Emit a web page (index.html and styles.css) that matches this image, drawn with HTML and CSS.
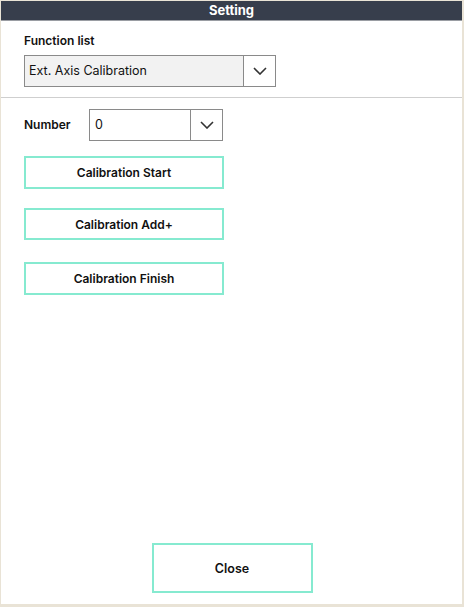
FILE: index.html
```html
<!DOCTYPE html>
<html>
<head>
<meta charset="utf-8">
<link rel="stylesheet" href="styles.css">
</head>
<body>
<div class="frame">
  <div class="header">Setting</div>
  <div class="panel">
    <div class="top">
      <div class="label">Function list</div>
      <div class="select wide">
        <div class="value">Ext. Axis Calibration</div>
        <div class="arrow"><svg width="14" height="8" viewBox="0 0 14 8"><path d="M1 1 L7 7 L13 1" fill="none" stroke="#333" stroke-width="1.6"/></svg></div>
      </div>
    </div>
    <div class="body">
      <div class="row">
        <div class="label inline">Number</div>
        <div class="select narrow">
          <div class="value white">0</div>
          <div class="arrow"><svg width="14" height="8" viewBox="0 0 14 8"><path d="M1 1 L7 7 L13 1" fill="none" stroke="#333" stroke-width="1.6"/></svg></div>
        </div>
      </div>
      <button class="btn b1">Calibration Start</button>
      <button class="btn b2">Calibration Add+</button>
      <button class="btn b3">Calibration Finish</button>
    </div>
    <div class="footer">
      <button class="btn close">Close</button>
    </div>
  </div>
</div>
</body>
</html>
```
FILE: styles.css
```css
* { box-sizing: border-box; }
html, body { margin: 0; padding: 0; }
body {
  width: 464px; height: 607px;
  background: #e9e3d6;
  font-family: "Inter", "Open Sans", sans-serif;
  color: #111;
}
.frame {
  margin: 1px 2px 0 1px;
  height: 603px;
  display: flex;
  flex-direction: column;
  background: #fff;
}
.header {
  height: 20px;
  background: #373e4c;
  color: #fff;
  font-weight: 700;
  font-size: 13px;
  text-align: center;
  line-height: 19px;
  border-bottom: 1px solid #9a9da3;
}
.panel { flex: 1; display: flex; flex-direction: column; }
.top {
  padding: 12px 0 10px 23px;
  border-bottom: 1px solid #cfcfcf;
}
.label {
  font-size: 12px;
  font-weight: 600;
  line-height: 16px;
  margin-bottom: 6px;
}
.label.inline { margin: 0; width: 65px; }
.select {
  display: flex;
  border: 1px solid #8a8a8a;
  height: 32px;
}
.select.wide { width: 252px; }
.select.narrow { width: 134px; }
.value {
  flex: 1;
  background: #f2f2f2;
  font-size: 12.5px;
  line-height: 30px;
  padding-left: 4px;
  border-right: 1px solid #8a8a8a;
}
.value.white { background: #fff; padding-left: 5px; }
.arrow {
  width: 31px;
  display: flex;
  align-items: center;
  justify-content: center;
  background: #fff;
}
.body {
  flex: 1;
  padding: 11px 0 0 23px;
  display: flex;
  flex-direction: column;
  align-items: flex-start;
}
.row { display: flex; align-items: center; margin-bottom: 15px; }
.btn {
  font-family: inherit;
  width: 200px;
  height: 33px;
  background: #fff;
  border: 2px solid #86ead0;
  font-size: 12px;
  font-weight: 600;
  color: #111;
  padding: 0;
}
.b2 { margin-top: 19px; height: 32px; }
.b3 { margin-top: 22px; }
.footer {
  display: flex;
  justify-content: center;
  padding: 0 0 11px 0;
}
.close {
  width: 161px;
  height: 50px;
  font-size: 12.5px;
  margin-left: 1px;
}
```
